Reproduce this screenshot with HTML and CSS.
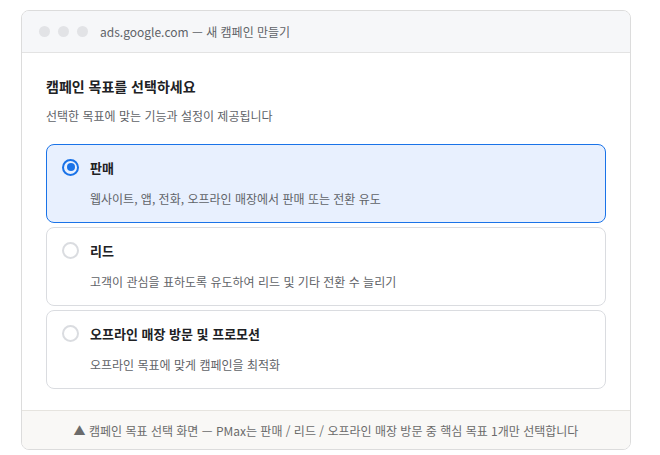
FILE: index.html
```html
<!DOCTYPE html>
<html lang="ko">
<head>
<meta charset="utf-8">
<link rel="stylesheet" href="styles.css">
</head>
<body>
<div class="window">
  <div class="titlebar">
    <span class="dot"></span><span class="dot"></span><span class="dot"></span>
    <span class="url">ads.google.com — 새 캠페인 만들기</span>
  </div>
  <div class="content">
    <h1 class="heading">캠페인 목표를 선택하세요</h1>
    <p class="sub">선택한 목표에 맞는 기능과 설정이 제공됩니다</p>
    <div class="cards">
      <div class="card selected">
        <div class="card-head"><span class="radio on"></span><span class="card-title">판매</span></div>
        <div class="card-desc">웹사이트, 앱, 전화, 오프라인 매장에서 판매 또는 전환 유도</div>
      </div>
      <div class="card">
        <div class="card-head"><span class="radio"></span><span class="card-title">리드</span></div>
        <div class="card-desc">고객이 관심을 표하도록 유도하여 리드 및 기타 전환 수 늘리기</div>
      </div>
      <div class="card">
        <div class="card-head"><span class="radio"></span><span class="card-title">오프라인 매장 방문 및 프로모션</span></div>
        <div class="card-desc">오프라인 목표에 맞게 캠페인을 최적화</div>
      </div>
    </div>
  </div>
  <div class="footer">▲ 캠페인 목표 선택 화면 — PMax는 판매 / 리드 / 오프라인 매장 방문 중 핵심 목표 1개만 선택합니다</div>
</div>
</body>
</html>
```
FILE: styles.css
```css
* { box-sizing: border-box; }
html, body { margin: 0; padding: 0; background: #fff; }
body {
  font-family: "Noto Sans CJK KR", "Noto Sans", sans-serif;
  color: #202124;
  padding: 10px 0 0 21px;
}
.window {
  width: 610px;
  height: 440px;
  border: 1px solid #dcdcdc;
  border-radius: 8px;
  overflow: hidden;
  display: flex;
  flex-direction: column;
  background: #fff;
}
.titlebar {
  height: 42px;
  flex: none;
  background: #f6f7f9;
  border-bottom: 1px solid #e3e3e3;
  display: flex;
  align-items: center;
  padding-left: 17px;
}
.dot {
  width: 11px;
  height: 11px;
  border-radius: 50%;
  background: #e2e3e6;
  margin-right: 8px;
}
.url {
  margin-left: 4px;
  font-size: 12px;
  color: #5f6368;
}
.content {
  flex: 1;
  padding: 23px 24px 0 24px;
}
.heading {
  margin: 0;
  font-size: 14px;
  font-weight: 700;
  line-height: 20px;
  color: #202124;
}
.sub {
  margin: 11px 0 0;
  font-size: 12px;
  line-height: 18px;
  color: #5f6368;
}
.cards {
  margin-top: 19px;
  display: flex;
  flex-direction: column;
  gap: 4px;
}
.card {
  height: 79px;
  border: 1px solid #dadce0;
  border-radius: 8px;
  padding: 12px 16px 0 15px;
  background: #fff;
}
.card.selected {
  background: #e8f0fe;
  border-color: #1a73e8;
}
.card-head {
  display: flex;
  align-items: center;
  height: 20px;
}
.radio {
  width: 17px;
  height: 17px;
  border-radius: 50%;
  border: 2px solid #dadce0;
  margin-right: 11px;
  flex: none;
  position: relative;
}
.radio.on {
  border-color: #1a73e8;
}
.radio.on::after {
  content: "";
  position: absolute;
  left: 2.5px;
  top: 2.5px;
  width: 8px;
  height: 8px;
  border-radius: 50%;
  background: #1a73e8;
}
.card-title {
  font-size: 13px;
  font-weight: 700;
  color: #202124;
}
.card-desc {
  margin-top: 13px;
  padding-left: 28px;
  font-size: 12px;
  line-height: 18px;
  color: #5f6368;
}
.footer {
  height: 39px;
  flex: none;
  background: #f9f8f6;
  border-top: 1px solid #e6e4df;
  display: flex;
  align-items: center;
  justify-content: center;
  font-size: 12px;
  color: #6b6b6b;
}
```
